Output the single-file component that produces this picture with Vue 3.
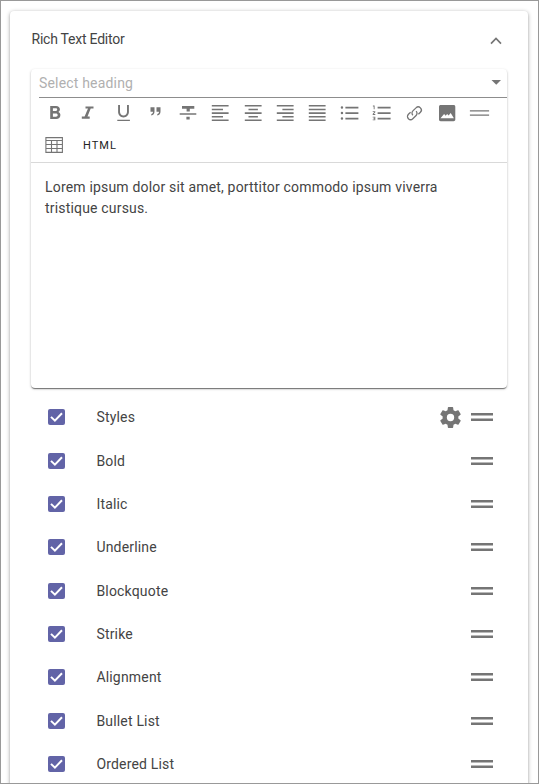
<script setup>
const options = ['Styles', 'Bold', 'Italic', 'Underline', 'Blockquote', 'Strike', 'Alignment', 'Bullet List', 'Ordered List']

// Each tool is drawn on a 24 x 24 grid
const tools = [
  { name: 'Bold', d: 'M4.2 5h5.9c2.300 0 3.800 1.300 3.800 3.300 0 1.300-.7 2.200-1.600 2.700 1.400.5 2.100 1.600 2.100 3 0 2.400-1.700 4-4.200 4h-6zM6.900 7.200v2.900h2.700c1 0 1.600-.6 1.600-1.500s-.6-1.400-1.600-1.400zM6.900 12.500v3.200h3c1.100 0 1.800-.6 1.800-1.600s-.7-1.600-1.800-1.600z' },
  { name: 'Italic', d: 'M6.500 5.500h8v2.100h-2.800L8.500 15.600h2.200v2.100H2.800v-2.100h2.800l3.400-8H6.500z' },
  { name: 'Underline', d: 'M12.500 16.400c3.100 0 5.400-2.400 5.400-5.400V4h-1.900v7c0 1.900-1.500 3.500-3.500 3.500s-3.500-1.600-3.500-3.500V4H7.100v7c0 3 2.300 5.400 5.400 5.400zM6.300 18.700h12.600v1.400H6.300z' },
  { name: 'Blockquote', d: 'M7.500 6.300h4v4.200c0 2.200-1 3.800-3.200 4v-1.400c1.100-.3 1.700-1.100 1.700-2.400H7.500zM13.500 6.300h4v4.200c0 2.200-1 3.800-3.200 4v-1.400c1.100-.3 1.700-1.100 1.700-2.400h-2.500z' },
  { name: 'Strike', d: 'M6 5h12.300v2.700h-4.500v2.700h-3.200V7.700H6zM3.700 12.200h16.600v1.600H3.700zM10.400 15.800h3.300v2.600h-3.300z' },
  { name: 'Align left', d: 'M3.800 4h16.800v1.600H3.800zM3.800 7.700H15v1.500H3.800zM3.800 11.200h16.800v1.700H3.800zM3.800 14.900H15v1.500H3.800zM3.800 18.500h16.800v1.600H3.800z' },
  { name: 'Align center', d: 'M3.800 4h16.800v1.600H3.800zM7.500 7.700h9.400v1.500H7.500zM3.800 11.200h16.800v1.700H3.800zM7.500 14.900h9.400v1.500H7.500zM3.800 18.500h16.800v1.600H3.800z' },
  { name: 'Align right', d: 'M3.800 4h16.800v1.600H3.800zM9.400 7.700h11.200v1.500H9.400zM3.800 11.200h16.800v1.700H3.800zM9.400 14.900h11.200v1.500H9.400zM3.800 18.500h16.800v1.600H3.800z' },
  { name: 'Justify', d: 'M3.800 4h16.800v1.600H3.800zM3.800 7.700h16.800v1.500H3.800zM3.800 11.200h16.800v1.700H3.800zM3.800 14.900h16.800v1.500H3.800zM3.800 18.500h16.800v1.600H3.800z' },
  { name: 'Bullet list', d: 'M7.400 5.800h13v1.700h-13zM7.400 11.200h13v1.800h-13zM7.400 16.700h13v1.700h-13zM5.200 6.600a1.250 1.250 0 1 1-2.500 0a1.250 1.250 0 1 1 2.500 0zM5.200 12.100a1.250 1.250 0 1 1-2.500 0a1.250 1.250 0 1 1 2.500 0zM5.200 17.600a1.250 1.250 0 1 1-2.500 0a1.250 1.250 0 1 1 2.500 0z' },
  { name: 'Ordered list', d: 'M7.600 5.800h13v1.700h-13zM7.600 11.200h13v1.800h-13zM7.600 16.700h13v1.700h-13zM2.900 4.600h1.700v3.600h-.9V5.400h-.8zM2.700 10.300h2.600v.9l-1.500 1.900h1.500v.8H2.700v-.8l1.500-2H2.700zM2.700 15.800h2.600v3.500H2.700v-.8h1.700v-.5h-.9v-.8h.9v-.6H2.700z' },
  { name: 'Link', stroke: true, d: 'M10.900 14.300a3.100 3.100 0 0 1 0-4.400l3.100-3a3.100 3.100 0 0 1 4.400 4.400l-2 2M14.100 10.100a3.100 3.100 0 0 1 0 4.400l-3.300 3.200a3.100 3.100 0 0 1-4.400-4.400l2.200-2.100' },
  { name: 'Image', d: 'M5.700 4h12.900c1 0 1.700.7 1.700 1.700v12.900c0 1-.7 1.700-1.700 1.700H5.700c-1 0-1.700-.7-1.700-1.700V5.700c0-1 .7-1.700 1.700-1.700zM5.500 17.300h13.400l-3.200-5.300-2.100 2.500-1.500-1.600-1.400 1.900-1.600-1.900z' },
  { name: 'Horizontal rule', d: 'M2.900 9.200h19.200v1.200H2.900zM2.900 13.600h19.200v1.200H2.900z' },
]
</script>

<template>
  <main class="frame">
    <section class="card">
      <header class="card-header">
        <span>Rich Text Editor</span>
        <svg class="chevron" viewBox="0 0 12 8"><path d="M1 6.600 6 1.500l5 5.100" /></svg>
      </header>
      <div class="editor">
        <div class="select">
          <span>Select heading</span>
          <svg class="caret" viewBox="0 0 10 5"><path d="M.5 0H10L5.250 4.800z" /></svg>
        </div>
        <div class="toolbar">
          <button v-for="t in tools" :key="t.name" class="tool" :aria-label="t.name">
            <svg viewBox="0 0 24 24" :class="{ line: t.stroke }"><path :d="t.d" fill-rule="evenodd" /></svg>
          </button>
        </div>
        <div class="toolbar second">
          <svg class="table" viewBox="0 0 18 16">
            <path d="M.9.600h16.500v14.800H.9zM.9 3.500h16.500M.9 7.500h16.500M.9 11.500h16.500M6.500 3.500v12M12 3.500v12" />
          </svg>
          <button class="html">HTML</button>
        </div>
        <p class="content">Lorem ipsum dolor sit amet, porttitor commodo ipsum viverra tristique cursus.</p>
      </div>
      <ul class="options">
        <li v-for="(o, i) in options" :key="o">
          <span class="check"><svg viewBox="0 0 17 16"><path d="M3 7.900 6.900 11.700 14 4.200" /></svg></span>
          <span class="label">{{ o }}</span>
          <svg v-if="i === 0" class="gear" viewBox="2 2 20 20">
            <path d="M19.430 12.980c.04-.32.07-.64.07-.98s-.03-.66-.07-.98l2.110-1.650c.19-.15.24-.42.12-.64l-2-3.460c-.12-.22-.39-.3-.61-.22l-2.490 1c-.52-.4-1.080-.73-1.690-.98l-.38-2.650C14.460 2.180 14.250 2 14 2h-4c-.25 0-.46.18-.49.42l-.38 2.650c-.61.25-1.170.59-1.690.98l-2.490-1c-.23-.09-.49 0-.61.22l-2 3.460c-.13.22-.07.49.12.64l2.110 1.650c-.04.32-.07.65-.07.98s.03.66.07.98l-2.110 1.650c-.19.15-.24.42-.12.64l2 3.460c.12.22.39.3.61.22l2.490-1c.52.4 1.080.73 1.690.98l.38 2.650c.03.24.24.42.49.42h4c.25 0 .46-.18.49-.42l.38-2.650c.61-.25 1.170-.59 1.690-.98l2.490 1c.23.09.49 0 .61-.22l2-3.460c.12-.22.07-.49-.12-.64zM12 15.500a3.500 3.500 0 1 1 0-7 3.500 3.500 0 0 1 0 7z" />
          </svg>
          <svg class="handle" viewBox="0 0 22 8"><path d="M0 0h22v2.400H0zM0 5.500h22v2.400H0z" /></svg>
        </li>
      </ul>
    </section>
  </main>
</template>

<style>
body { background: #fff; }
</style>

<style scoped>
* { box-sizing: border-box; }
.frame {
  height: 784px;
  padding: 10px 10px 0 9px;
  border: 1px solid #999;
  overflow: hidden;
  font-family: Roboto, sans-serif;
  font-size: 14px;
  color: #444;
}
.card {
  height: 820px;
  padding: 0 21px;
  border-radius: 4px;
  box-shadow: 0 1px 4px rgba(0, 0, 0, .32), 0 1px 2px rgba(0, 0, 0, .15);
}
.card-header {
  display: flex;
  align-items: center;
  justify-content: space-between;
  height: 58px;
  padding: 0 5.500px 2px .5px;
  letter-spacing: -.23px;
}
.chevron { width: 12px; height: 8px; margin-top: 3px; fill: none; stroke: #757575; stroke-width: 1.700; }
.editor {
  height: 319px;
  border-radius: 4px;
  box-shadow: 0 2px 1px -1px rgba(0, 0, 0, .3), 0 1px 1px rgba(0, 0, 0, .25), 0 1px 3px rgba(0, 0, 0, .2);
}
.select {
  display: flex;
  align-items: center;
  justify-content: space-between;
  height: 29px;
  margin-left: 8px;
  padding-right: 6px;
  border-bottom: 1px solid #8d8d8d;
  color: #b0b0b0;
  letter-spacing: .18px;
}
.caret { width: 10px; height: 5px; margin-top: -2px; fill: #757575; }
.toolbar { display: flex; height: 30px; padding-left: 11px; }
.second { align-items: center; height: 35px; padding: 0 0 1px 14px; border-bottom: 1px solid #d9d9d9; }
button { padding: 0; border: 0; background: none; font: inherit; }
.tool { display: flex; align-items: center; justify-content: center; flex: 0 0 32.400px; }
.tool svg { width: 24px; height: 24px; fill: #757575; }
.tool .line { fill: none; stroke: #757575; stroke-width: 1.300; }
.table { width: 18px; height: 16px; fill: none; stroke: #757575; stroke-width: 1.100; }
.html { margin: 2px 0 0 20px; font-size: 11px; letter-spacing: 1.050px; color: #222; }
.content { margin: 0; padding: 14px 40px 0 14px; line-height: 21px; letter-spacing: .18px; }
.options { margin: 0; padding: 7.600px 14px 0 17px; list-style: none; }
.options li { display: flex; align-items: center; height: 43.340px; }
.check { display: flex; width: 17px; height: 16px; border-radius: 2px; background: #6264a7; }
.check svg { width: 17px; height: 16px; fill: none; stroke: #fff; stroke-width: 2; }
.label { flex: 1; margin-left: 31.400px; letter-spacing: .18px; }
.gear { width: 21px; height: 21px; margin-right: 10px; fill: #757575; }
.handle { width: 22px; height: 8px; fill: #757575; }
</style>
